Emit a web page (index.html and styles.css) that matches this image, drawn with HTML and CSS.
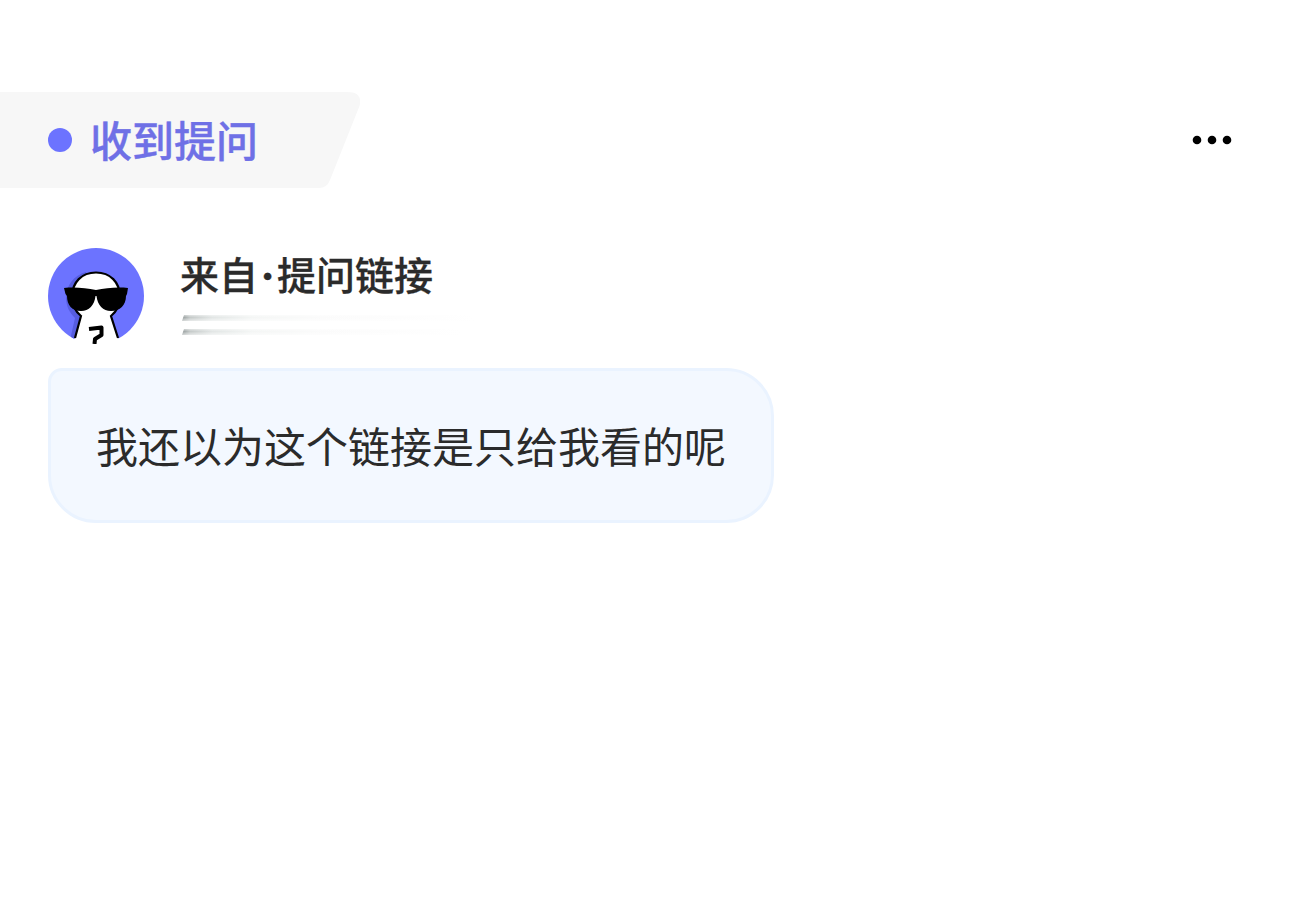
FILE: index.html
```html
<!DOCTYPE html>
<html lang="zh-CN">
<head>
  <meta charset="UTF-8" />
  <meta name="viewport" content="width=device-width, initial-scale=1.0"/>
  <title>收到提问</title>
  <link rel="stylesheet" href="styles.css">
</head>
<body>
  <div class="page">
    <!-- Header -->
    <header class="header">
      <div class="tab">
        <svg class="tab-bg" width="361" height="96" viewBox="0 0 361 96">
          <path d="M0 0H347Q363 0 359.500 14L330 88Q327 96 319 96H0Z" fill="#f7f7f7"/>
        </svg>
        <span class="tab-dot"></span>
        <h1 class="tab-title">收到提问</h1>
      </div>
      <button class="more-btn" aria-label="更多">
        <svg width="40" height="10" viewBox="0 0 40 10">
          <circle cx="5" cy="5" r="4.300"/>
          <circle cx="20" cy="5" r="4.300"/>
          <circle cx="35" cy="5" r="4.300"/>
        </svg>
      </button>
    </header>

    <!-- Sender -->
    <div class="sender">
      <svg class="avatar" viewBox="0 0 96 96">
        <defs>
          <clipPath id="avatarClip"><circle cx="48" cy="48" r="48"/></clipPath>
        </defs>
        <circle cx="48" cy="48" r="48" fill="#6c73ff"/>
        <g clip-path="url(#avatarClip)">
          <path d="M38 24C26 27 18 38 18 49C18 59 22 65 27 70L22 92H30L42 40Z" fill="#565de0"/>
        </g>
        <path d="M27 90L33 68C27 63 24 57 24 49C24 34 34 24.500 48 24.500C62 24.500 72 34 72 49C72 57 69 63 63 68L70 90L74 96H22Z" fill="#fff"/>
        <path d="M27 90L33 68C27 63 24 57 24 49C24 34 34 24.500 48 24.500C62 24.500 72 34 72 49C72 57 69 63 63 68L70 90" fill="none" stroke="#000" stroke-width="2.200"/>
        <path d="M16 40C27 39 38 40 48 42C58 40 69 39 80 40L79 46L78 48C78 57 72 63 63 63C55 63 49.500 57 48.500 48H47.500C46.500 57 41 63 33 63C24 63 19 57 19 48L17.500 46Z" fill="#000"/>
        <path d="M41 81L53.500 79.500V87L47 91L46.500 96" fill="none" stroke="#000" stroke-width="4" stroke-linejoin="round"/>
      </svg>
      <div class="sender-info">
        <h2 class="sender-name"><span>来自</span><span class="sep">·</span><span>提问链接</span></h2>
        <div class="sender-lines">
          <span class="line"></span>
          <span class="line short"></span>
        </div>
      </div>
    </div>

    <!-- Message -->
    <p class="bubble">我还以为这个链接是只给我看的呢</p>
  </div>
</body>
</html>
```
FILE: styles.css
```css
* {
  box-sizing: border-box;
}
body {
  margin: 0;
  background: #fff;
  color: #2b2b2b;
  font-family: 'Noto Sans CJK SC', sans-serif;
}
.page {
  height: 913px;
  padding-top: 92px;
}
.header {
  display: flex;
  justify-content: space-between;
  align-items: center;
}
.tab {
  position: relative;
  display: flex;
  align-items: center;
  gap: 18px;
  width: 361px;
  height: 96px;
  padding-left: 48px;
}
.tab-bg {
  position: absolute;
  top: 0;
  left: 0;
  z-index: -1;
}
.tab-dot {
  width: 24px;
  height: 24px;
  border-radius: 50%;
  background: #6c73ff;
}
.tab-title {
  margin: 0 0 3px;
  font-size: 42px;
  font-weight: 500;
  line-height: 60px;
  color: #6f70e6;
  -webkit-text-stroke: 0.4px #6f70e6;
}
.more-btn {
  display: flex;
  margin-right: 58px;
  padding: 0;
  border: none;
  background: none;
  cursor: pointer;
}
.sender {
  display: flex;
  gap: 36px;
  margin: 60px 0 24px 48px;
}
.avatar {
  width: 96px;
  height: 96px;
}
.sender-name {
  display: flex;
  margin: 0;
  font-size: 39px;
  font-weight: 500;
  line-height: 50px;
  -webkit-text-stroke: 0.3px #2b2b2b;
}
.sep {
  width: 19px;
  font-family: Lato, sans-serif;
  font-weight: bold;
  font-size: 39px;
  text-align: center;
}
.sender-lines {
  display: flex;
  flex-direction: column;
  gap: 8px;
  margin: 17px 0 0 2px;
}
.line {
  width: 295px;
  height: 6px;
  background: linear-gradient(to bottom, rgba(255, 255, 255, 0.5), transparent 40%, rgba(255, 255, 255, 0.6)),
              linear-gradient(to right, #949b9b 0, #c4c9c8 8px, #e2e6e5 30px, #f4f6f5 70px, #fbfbfb 140px, #fff);
  clip-path: polygon(2px 0, 100% 0, 100% 100%, 0 100%);
  filter: blur(0.6px);
}
.line.short {
  width: 280px;
}
.bubble {
  width: 726px;
  height: 155px;
  margin: 0 0 0 48px;
  padding: 43px 45px 47px;
  border: 3px solid #eaf3ff;
  border-radius: 14px 48px 48px 48px;
  background: #f3f8ff;
  font-size: 42px;
  line-height: 61px;
  white-space: nowrap;
}
```
